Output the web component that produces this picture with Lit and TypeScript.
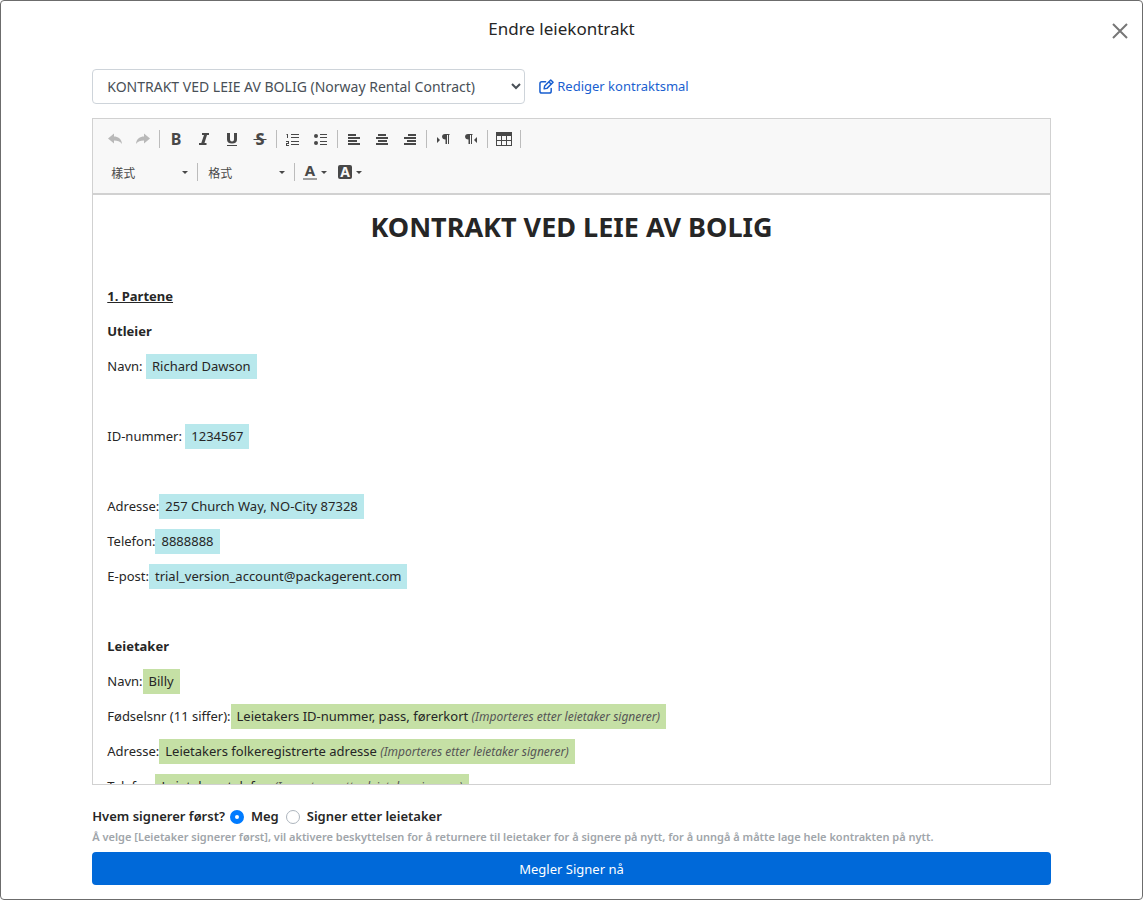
import { LitElement, html, svg, css, nothing, TemplateResult } from "lit";
import { customElement, property, state } from "lit/decorators.js";

type Tone = "owner" | "tenant";
interface Row {
  label?: string;
  value?: string;
  note?: string;
  tone?: Tone;
  spaced?: boolean;
  heading?: boolean;
  underline?: boolean;
}

const IMPORTED = "(Importeres etter leietaker signerer)";

const ROWS: Row[] = [
  {},
  { label: "1. Partene", heading: true, underline: true },
  { label: "Utleier", heading: true },
  { label: "Navn:", value: "Richard Dawson", tone: "owner", spaced: true },
  {},
  { label: "ID-nummer:", value: "1234567", tone: "owner", spaced: true },
  {},
  { label: "Adresse:", value: "257 Church Way, NO-City 87328", tone: "owner" },
  { label: "Telefon:", value: "8888888", tone: "owner" },
  { label: "E-post:", value: "trial_version_account@packagerent.com", tone: "owner" },
  {},
  { label: "Leietaker", heading: true },
  { label: "Navn:", value: "Billy", tone: "tenant" },
  { label: "Fødselsnr (11 siffer):", value: "Leietakers ID-nummer, pass, førerkort", note: IMPORTED, tone: "tenant" },
  { label: "Adresse:", value: "Leietakers folkeregistrerte adresse", note: IMPORTED, tone: "tenant" },
  { label: "Telefon:", value: "Leietakers telefon", note: IMPORTED, tone: "tenant" },
];

const ICONS: Record<string, TemplateResult> = {
  undo: svg`<path d="M1 7.500 7 2.500v3c4 0 7.500 2 8 7.500C13 10 10.500 9.500 7 9.500v3z"/>`,
  redo: svg`<path d="M15 7.500 9 2.500v3C5 5.500 1.500 7.500 1 13 3 10 5.500 9.500 9 9.500v3z"/>`,
  bold: svg`<text x="8" y="14" text-anchor="middle" font-size="16" font-weight="700">B</text>`,
  italic: svg`<path d="M6 2h7v2h-2L8.500 12h2v2H3v-2h2.300L8 4H6z"/>`,
  underline: svg`<path d="M3 2h3v6.500Q6 10.500 8 10.500T10 8.500V2h3v6.500Q13 12.500 8 12.500T3 8.500zM3 14h10v1H3z"/>`,
  strike: svg`<text x="8" y="14" text-anchor="middle" font-size="16" font-weight="800">S</text><path d="M1.500 8h13v1h-13z"/>`,
  numbered: svg`<path d="M1.500 3h1.500v4h-1V4h-.5zM1 10h3v3H2v1h2v1H1v-3h2v-1H1zM6 3h8v1H6zM6 6h8v1H6zM6 10h8v1H6zM6 13h8v1H6z"/>`,
  bulleted: svg`<circle cx="3" cy="5" r="2"/><circle cx="3" cy="12" r="2"/><path d="M7 3h7v1H7zM7 6h7v1H7zM7 10h7v1H7zM7 13h7v1H7z"/>`,
  left: svg`<path d="M2 3h8v2H2zM2 6h12v2H2zM2 9h9v2H2zM2 12h12v2H2z"/>`,
  center: svg`<path d="M4 3h8v2H4zM2 6h12v2H2zM4 9h9v2H4zM2 12h12v2H2z"/>`,
  right: svg`<path d="M6 3h8v2H6zM2 6h12v2H2zM5 9h9v2H5zM2 12h12v2H2z"/>`,
  ltr: svg`<path d="M2 6l3 3-3 3zM10 3h4.500v1H14v9h-1V4h-1v9h-1.500V8.500C6 8.500 6 3 10 3z"/>`,
  rtl: svg`<path d="M14 6l-3 3 3 3zM5 3h4.500v1H9v9H8V4H7v9H5.500V8.500C1 8.500 1 3 5 3z"/>`,
  table: svg`<path fill-rule="evenodd" d="M0 1h16v14H0zM1 5v4h4V5zM6 5v4h4V5zM11 5v4h4V5zM1 10v4h4v-4zM6 10v4h4v-4zM11 10v4h4v-4z"/>`,
  color: svg`<text x="8" y="12" text-anchor="middle" font-size="15" font-weight="700">A</text><path class="swatch" d="M1 14h14v2H1z"/>`,
  fill: svg`<rect x="1" y="1" width="14" height="14" rx="2"/><text class="knockout" x="8" y="13" text-anchor="middle" font-size="14" font-weight="700">A</text>`,
};

@customElement("tool-button")
export class ToolButton extends LitElement {
  @property() icon = "";
  @property() label = "";
  @property({ type: Boolean }) disabled = false;
  @property({ type: Boolean }) menu = false;

  static styles = css`
    :host { display: block; }
    .tool {
      display: flex; align-items: center; gap: 3px; height: 28px; padding: 0 6px;
      border: 0; border-radius: 2px; background: none; color: #484848; cursor: pointer;
    }
    .tool:hover:enabled { background: #e5e5e5; }
    .tool:disabled { color: #b9b9b9; cursor: default; }
    :host([menu]) .tool { padding: 0 5px; }
    .glyph { width: 16px; height: 16px; fill: currentColor; font-family: "Noto Sans", sans-serif; }
    .swatch { fill: #a0a0a0; }
    .knockout { fill: #f8f8f8; }
    .caret { width: 6px; height: 3px; fill: currentColor; }
  `;

  render() {
    return html`<button class="tool" type="button" aria-label=${this.label} title=${this.label} ?disabled=${this.disabled}>
      <svg class="glyph" viewBox="0 0 16 16" aria-hidden="true">${ICONS[this.icon]}</svg>
      ${this.menu ? html`<svg class="caret" viewBox="0 0 6 3" aria-hidden="true"><path d="M0 0h6L3 3z" /></svg>` : nothing}
    </button>`;
  }
}

const GROUPS: [string, string][][] = [
  [["undo", "Angre"], ["redo", "Gjør om"]],
  [["bold", "Fet"], ["italic", "Kursiv"], ["underline", "Understreking"], ["strike", "Gjennomstreking"]],
  [["numbered", "Nummerert liste"], ["bulleted", "Punktliste"]],
  [["left", "Venstrejuster"], ["center", "Midtstill"], ["right", "Høyrejuster"]],
  [["ltr", "Venstre til høyre"], ["rtl", "Høyre til venstre"]],
  [["table", "Tabell"]],
];

@customElement("app-root")
export class AppRoot extends LitElement {
  @state() private signer = "me";

  static styles = css`
    :host { display: block; font-family: "Noto Sans", "Noto Sans CJK TC", sans-serif; font-size: 13px; line-height: 21px; color: #262626; }
    * { box-sizing: border-box; }
    .dialog {
      display: flex; flex-direction: column; height: 100vh; min-height: 480px;
      border: 1px solid #6c6c6c; border-radius: 4px; background: #fff;
    }
    .header { display: flex; align-items: center; padding: 14px 14px 0 0; }
    .title { flex: 1; margin: 0; padding-left: 10px; text-align: center; font-size: 17px; line-height: 28px; font-weight: 400; }
    .close { display: flex; padding: 4px 0 0; border: 0; background: none; color: #777; cursor: pointer; }
    .close-icon { width: 16px; height: 16px; fill: none; stroke: currentColor; stroke-width: 2; }
    .content { display: flex; flex-direction: column; flex: 1; min-height: 0; padding: 26px 8% 14px; }
    .template { display: flex; align-items: center; gap: 14px; margin-bottom: 14px; }
    .template-select {
      width: 433px; height: 35px; padding: 0 10px; border: 1px solid #ced4da; border-radius: 4px;
      background: #fff; color: #495057; font: 14px "Noto Sans", sans-serif;
    }
    .edit { display: flex; align-items: center; gap: 3px; color: #1a5fd0; text-decoration: none; }
    .edit-icon { width: 15px; height: 15px; fill: none; stroke: currentColor; stroke-width: 1.6; stroke-linejoin: round; stroke-linecap: round; }
    .editor { display: flex; flex-direction: column; flex: 1; min-height: 0; border: 1px solid #d1d1d1; }
    .toolbar { padding: 6px 8px 7px; border-bottom: 2px solid #d1d1d1; background: #f8f8f8; }
    .tools { display: flex; flex-wrap: wrap; align-items: center; min-height: 28px; }
    .tools + .tools { margin-top: 5px; padding-left: 2px; }
    .group { display: flex; align-items: center; }
    .rule { width: 1px; height: 18px; margin: 0 2px; background: #bcbcbc; }
    .combo { display: flex; align-items: center; width: 92px; padding: 0 7px 0 8px; }
    .combo-select { flex: 1; min-width: 0; padding: 0; border: 0; appearance: none; background: none; color: #484848; font: 12px "Noto Sans CJK TC", sans-serif; }
    .caret { width: 6px; height: 3px; fill: #484848; }
    .page { flex: 1; min-height: 0; overflow-y: auto; scrollbar-width: none; padding: 15px 14px; }
    .page-title { margin: 0 0 7px; text-align: center; font-size: 27px; line-height: 34px; font-weight: 700; }
    .row { min-height: 21px; margin: 0 0 14px; }
    .underline { text-decoration: underline; }
    .tag { display: inline-block; margin: -2px 0; padding: 2px 6px; }
    .owner { background: #b8e8ec; }
    .tenant { background: #c5e0a5; }
    .note { font-size: 12px; color: #555; }
    .signing { display: flex; flex-wrap: wrap; align-items: center; margin: 21px 0 0; padding: 0; border: 0; font-weight: 600; }
    .question { margin-right: 5px; }
    .choice { display: flex; align-items: center; gap: 7px; margin-right: 7px; }
    .radio { appearance: none; width: 14px; height: 14px; margin: 0; border: 1px solid #adb5bd; border-radius: 50%; background: #fff; }
    .radio:checked { border: 5px solid #007bff; }
    .help { margin: 0 0 5px; font-size: 11px; line-height: 20px; font-weight: 600; color: #a0a5aa; }
    .submit { flex: none; height: 33px; border: 0; border-radius: 4px; background: #0069d9; color: #fff; font: 13px "Noto Sans", sans-serif; cursor: pointer; }
  `;

  private combo(label: string) {
    return html`<label class="combo">
      <select class="combo-select" aria-label=${label}><option>${label}</option></select>
      <svg class="caret" viewBox="0 0 6 3" aria-hidden="true"><path d="M0 0h6L3 3z" /></svg>
    </label>`;
  }

  private row(r: Row) {
    if (!r.label) return html`<p class="row"></p>`;
    if (r.heading) return html`<p class="row"><strong class=${r.underline ? "underline" : ""}>${r.label}</strong></p>`;
    return html`<p class="row">${r.label}${r.spaced ? " " : ""}<span class="tag ${r.tone}">${r.value}${r.note ? html` <em class="note">${r.note}</em>` : nothing}</span></p>`;
  }

  private choice(value: string, label: string) {
    return html`<label class="choice">
      <input class="radio" type="radio" name="signer" .value=${value} .checked=${this.signer === value} @change=${() => (this.signer = value)} />
      ${label}
    </label>`;
  }

  render() {
    return html`<div class="dialog" role="dialog" aria-labelledby="title">
      <header class="header">
        <h1 class="title" id="title">Endre leiekontrakt</h1>
        <button class="close" type="button" aria-label="Lukk">
          <svg class="close-icon" viewBox="0 0 16 16"><path d="M1 1l14 14M15 1L1 15" /></svg>
        </button>
      </header>
      <main class="content">
        <div class="template">
          <select class="template-select" aria-label="Kontraktsmal">
            <option>KONTRAKT VED LEIE AV BOLIG (Norway Rental Contract)</option>
          </select>
          <a class="edit" href="#">
            <svg class="edit-icon" viewBox="0 0 16 16" aria-hidden="true">
              <path d="M7 3H3Q1 3 1 5v8q0 2 2 2h8q2 0 2-2v-3M5.500 10.500l.5-3L12.500 1 15 3.500 8.500 10zM10.500 3 13 5.500" />
            </svg>
            <span>Rediger kontraktsmal</span>
          </a>
        </div>
        <section class="editor">
          <div class="toolbar" role="toolbar">
            <div class="tools">
              ${GROUPS.map(
                (group) => html`<div class="group">
                  ${group.map(([icon, label]) => html`<tool-button .icon=${icon} .label=${label} .disabled=${icon === "undo" || icon === "redo"}></tool-button>`)}
                  <span class="rule"></span>
                </div>`
              )}
            </div>
            <div class="tools">
              ${this.combo("樣式")}<span class="rule"></span>${this.combo("格式")}<span class="rule"></span>
              <tool-button icon="color" label="Tekstfarge" menu></tool-button>
              <tool-button icon="fill" label="Bakgrunnsfarge" menu></tool-button>
            </div>
          </div>
          <article class="page">
            <h2 class="page-title">KONTRAKT VED LEIE AV BOLIG</h2>
            ${ROWS.map((r) => this.row(r))}
          </article>
        </section>
        <fieldset class="signing" aria-label="Hvem signerer først?">
          <span class="question">Hvem signerer først?</span>
          ${this.choice("me", "Meg")}${this.choice("tenant", "Signer etter leietaker")}
        </fieldset>
        <p class="help">Å velge [Leietaker signerer først], vil aktivere beskyttelsen for å returnere til leietaker for å signere på nytt, for å unngå å måtte lage hele kontrakten på nytt.</p>
        <button class="submit" type="button">Megler Signer nå</button>
      </main>
    </div>`;
  }
}
